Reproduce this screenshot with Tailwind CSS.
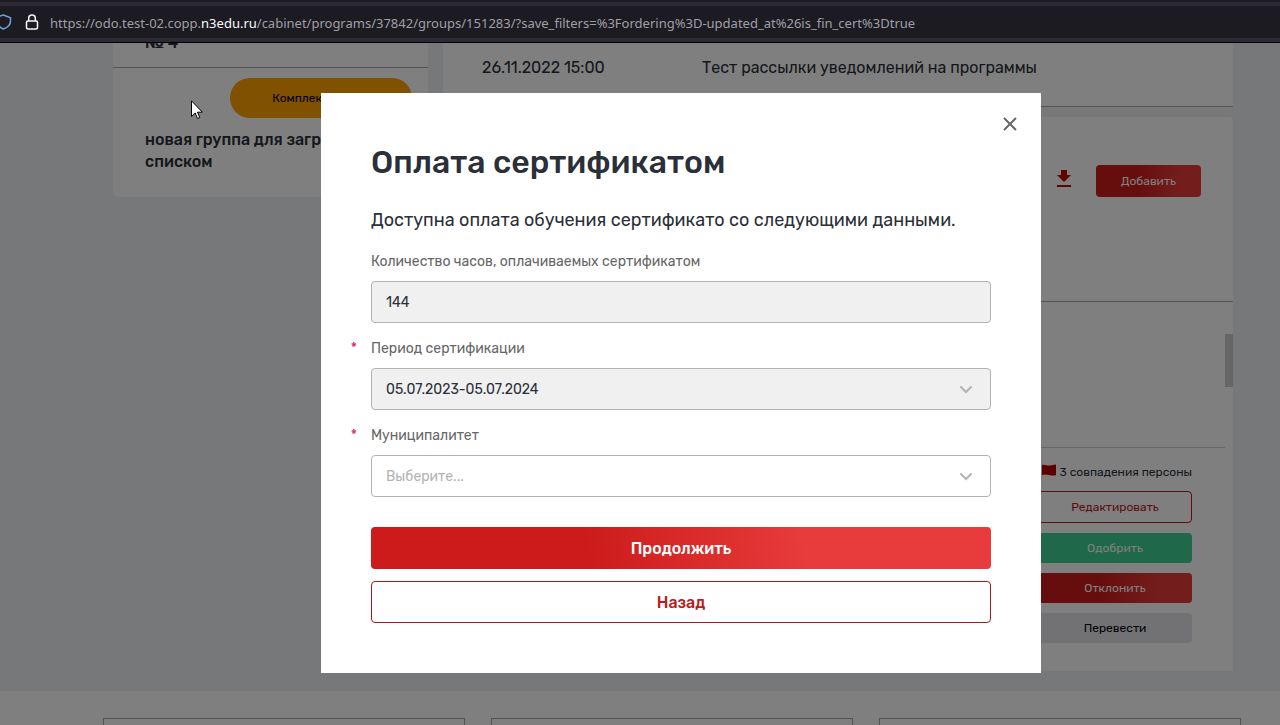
<!DOCTYPE html>
<html lang="ru">
<head>
  <meta charset="UTF-8" />
  <meta name="viewport" content="width=device-width, initial-scale=1.0" />
  <title>Оплата сертификатом</title>
  <script src="https://cdn.jsdelivr.net/npm/@tailwindcss/browser@4"></script>
</head>
<body class="h-screen overflow-hidden flex flex-col bg-[#eef0f2] font-[Rubik,Roboto,sans-serif] text-[#2a2f38]">

  <!-- address bar -->
  <header class="shrink-0 bg-[#2b2a33] border-t-2 border-b border-t-[#1c1b22] border-b-black py-1">
    <div class="h-8 bg-[#1c1b22] flex items-center font-['Noto_Sans',sans-serif] text-[13px] text-[#a09fa8]">
      <svg class="w-3 h-4 shrink-0" viewBox="0 0 12 16" fill="none" stroke="#6fa3d8" stroke-width="1.5" aria-hidden="true">
        <path d="M-3 3 3.500 1l7 2.800v3.200c0 3.600-3 6.500-7 8-2.500-.9-5-3-6-5" />
      </svg>
      <svg class="ml-3 w-4 h-4 shrink-0" viewBox="0 0 16 16" fill="none" stroke="#fbfbfe" stroke-width="1.500" aria-hidden="true">
        <rect x="2.500" y="7" width="11" height="8" rx="1.500" />
        <path d="M4.700 7V4.300a3.300 3.300 0 0 1 6.600 0V7" />
      </svg>
      <p class="ml-2.5 pt-1 whitespace-nowrap">https://odo.test-02.copp.<span class="text-[#fbfbfe]">n3edu.ru</span>/cabinet/programs/37842/groups/151283/?save_filters=%3Fordering%3D-updated_at%26is_fin_cert%3Dtrue</p>
    </div>
  </header>

  <div class="relative grow min-h-0 overflow-hidden">

    <!-- page -->
    <main class="pl-[113px] pr-[47px] flex gap-[15px] items-start">
      <aside class="w-[315px] shrink-0 bg-white rounded-b-md">
        <div class="h-[25px] px-8 border-b border-[#a8a8a8] flex flex-col">
          <p class="-mt-3 text-base leading-6 font-medium">№ 4</p>
        </div>
        <div class="pt-2.5 pb-6 px-4">
          <button type="button" class="block ml-auto w-[182px] h-10 rounded-full bg-[#ffa200] text-xs text-black">Комплектование</button>
          <p class="mt-[11px] px-4 text-base leading-[22px] font-medium">новая группа для загрузки<br>списком</p>
        </div>
      </aside>

      <div class="grow min-w-0">
        <section class="h-16 bg-white border-b border-[#a8a8a8] pl-[39px] pt-[13px] flex text-base">
          <time class="w-[220px]">26.11.2022 15:00</time>
          <p>Тест рассылки уведомлений на программы</p>
        </section>

        <section class="mt-2.5 bg-white rounded-t-sm">
          <div class="h-[185px] border-b border-[#a8a8a8] pt-12 pr-8 flex justify-end items-start gap-6">
            <button type="button" aria-label="Скачать" class="mt-1">
              <svg class="w-4 h-[18px]" viewBox="0 0 16 18" fill="#c00808" aria-hidden="true">
                <path d="M5 1h6v5h4l-7 7-7-7h4zM1 16h14v2H1z" />
              </svg>
            </button>
            <button type="button" class="w-[105px] h-8 rounded bg-linear-to-r from-[#cd1b1b] from-40% to-[#e83b3b] to-80% text-xs text-white">Добавить</button>
          </div>
          <div class="mt-8 ml-auto w-2 h-[53px] bg-[#cdcdcd]"></div>
          <div class="mt-[60px] mr-2 border-t border-[#cfcfcf] pt-3.5 pr-[33px] pb-7 flex flex-col items-end text-xs">
            <p class="mb-[9px] flex items-center gap-1 leading-5">
              <svg class="w-3.5 h-3 mb-1" viewBox="0 0 14 12" fill="#b80000" aria-hidden="true">
                <path d="M0 1c2.500-1 4.500.6 7 .6S12 .5 14 .5v10.500c-2.500 1-4.500.5-7 0s-4.500-1-7 0z" />
              </svg>
              3 совпадения персоны
            </p>
            <div class="flex flex-col gap-2.5 w-[154px]">
              <button type="button" class="h-8 rounded border border-[#b81c1c] text-[#b81c1c]">Редактировать</button>
              <button type="button" class="h-[30px] rounded bg-[#41d095] text-white">Одобрить</button>
              <button type="button" class="h-[30px] rounded bg-linear-to-r from-[#cd1b1b] from-40% to-[#e83b3b] to-80% text-white">Отклонить</button>
              <button type="button" class="h-[30px] rounded bg-[#e4e4ea] text-black">Перевести</button>
            </div>
          </div>
        </section>
      </div>
    </main>

    <footer class="mt-5 h-20 bg-white pt-[27px] pl-[103px] pr-[39px] grid grid-cols-3 gap-[26px]">
      <div class="border border-[#a8a8a8]"></div>
      <div class="border border-[#a8a8a8]"></div>
      <div class="border border-[#a8a8a8]"></div>
    </footer>

    <!-- modal -->
    <div class="absolute inset-0 bg-black/50 pl-[82px] pt-[50px] flex justify-center items-start">
      <form role="dialog" aria-labelledby="title" class="relative w-[720px] bg-white px-[50px] pt-12 pb-[50px]">
        <button type="button" aria-label="Закрыть" class="absolute top-6 right-6">
          <svg class="w-3.5 h-3.5" viewBox="0 0 14 14" fill="none" stroke="#666" stroke-width="2" aria-hidden="true">
            <path d="M1 1l12 12M13 1 1 13" />
          </svg>
        </button>

        <h1 id="title" class="text-[32px] leading-[42px] font-medium">Оплата сертификатом</h1>
        <p class="mt-[25px] text-lg leading-6 whitespace-nowrap">Доступна оплата обучения сертификато со следующими данными.</p>

        <label for="hours" class="block mt-[18px] text-sm leading-6 text-[#666]">Количество часов, оплачиваемых сертификатом</label>
        <input id="hours" type="text" value="144" readonly class="block mt-[7px] w-full h-[42px] rounded border border-[#b3b3b3] bg-[#f0f0f0] px-3.5 text-sm" />

        <label for="period" class="relative block mt-3.5 text-sm leading-6 text-[#666]"><span class="absolute right-full mr-3.5 text-[#e0245e]">*</span>Период сертификации</label>
        <div class="relative mt-[7px]">
          <select id="period" class="block appearance-none w-full h-[42px] rounded border border-[#b3b3b3] bg-[#f0f0f0] px-3.5 pt-px text-sm">
            <option>05.07.2023-05.07.2024</option>
          </select>
          <svg class="absolute right-[19px] top-[18px] w-3 h-2 pointer-events-none" viewBox="0 0 12 8" fill="none" stroke="#b3b3b3" stroke-width="2" stroke-linecap="round" aria-hidden="true">
            <path d="M1 1l5 5 5-5" />
          </svg>
        </div>

        <label for="city" class="relative block mt-3.5 text-sm leading-6 text-[#666]"><span class="absolute right-full mr-3.5 text-[#e0245e]">*</span>Муниципалитет</label>
        <div class="relative mt-[7px]">
          <select id="city" class="block appearance-none w-full h-[42px] rounded border border-[#b3b3b3] bg-white px-3.5 pt-px text-sm text-[#b3b3b3]">
            <option>Выберите...</option>
          </select>
          <svg class="absolute right-[19px] top-[18px] w-3 h-2 pointer-events-none" viewBox="0 0 12 8" fill="none" stroke="#b3b3b3" stroke-width="2" stroke-linecap="round" aria-hidden="true">
            <path d="M1 1l5 5 5-5" />
          </svg>
        </div>

        <button type="submit" class="block mt-[30px] w-full h-[42px] pt-0.5 rounded bg-linear-[80deg] from-[#cd1b1b] from-35% to-[#e83b3b] to-70% font-medium text-white">Продолжить</button>
        <button type="button" class="block mt-3 w-full h-[42px] pt-0.5 rounded border border-[#a31c1c] font-medium text-[#b81c1c]">Назад</button>
      </form>
    </div>

    <!-- cursor -->
    <svg class="absolute left-[191px] top-[57px] w-3 h-5" viewBox="0 0 12 20" fill="#fff" stroke="#000" stroke-width="1" aria-hidden="true">
      <path d="M.5.8v15.700l3.700-3.500 2.400 5.500 2.200-1-2.400-5.300h5z" />
    </svg>
  </div>
</body>
</html>
